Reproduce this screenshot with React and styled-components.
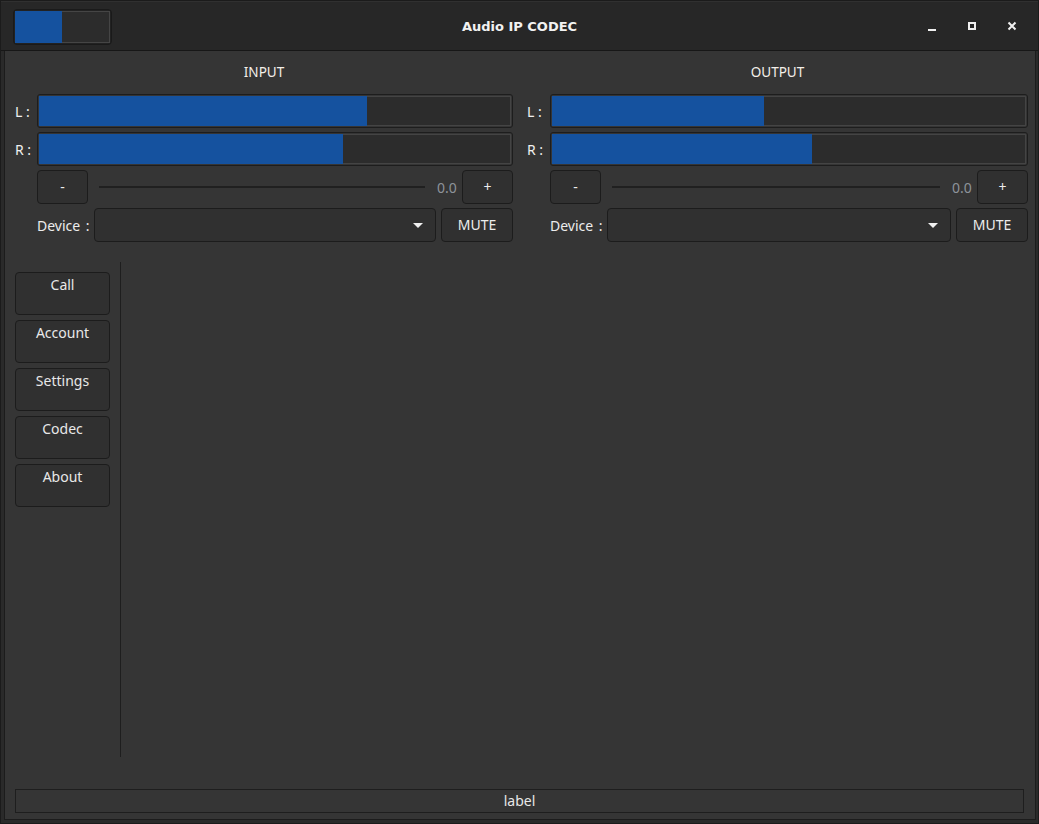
import React from 'react';
import styled, { createGlobalStyle } from 'styled-components';

const GlobalStyle = createGlobalStyle`
  html, body {
    margin: 0;
    padding: 0;
    background: #2a2a2a;
  }
  * {
    box-sizing: border-box;
  }
`;

const Window = styled.div`
  width: 1039px;
  height: 824px;
  display: flex;
  flex-direction: column;
  background: #2a2a2a;
  border: 1px solid #1b1b1b;
  font-family: 'Noto Sans', 'Open Sans', sans-serif;
  font-size: 14px;
  color: #ececec;
`;

const TitleBar = styled.div`
  height: 50px;
  flex: none;
  display: flex;
  align-items: center;
  position: relative;
  padding: 0 0 0 12px;
  background: #272727;
  border-top: 1px solid #303030;
  border-bottom: 1px solid #171717;
`;

const Toggle = styled.div`
  width: 99px;
  height: 36px;
  margin-top: 1px;
  padding: 1px;
  border: 1px solid #1a1a1a;
  border-radius: 4px;
  background: #222;
  display: flex;
`;

const ToggleTrack = styled.div`
  flex: 1;
  display: flex;
  background: #2c2c2c;
  border: 1px solid #454545;
`;

const ToggleKnob = styled.div`
  width: 47px;
  margin: -1px 0 -1px -1px;
  background: #15529f;
`;

const Title = styled.div`
  position: absolute;
  left: 0;
  right: 0;
  top: 0;
  bottom: 0;
  display: flex;
  align-items: center;
  justify-content: center;
  font-family: 'DejaVu Sans', sans-serif;
  font-weight: bold;
  font-size: 13px;
  color: #f2f2f2;
  pointer-events: none;
`;

const WindowControls = styled.div`
  margin-left: auto;
  display: flex;
  align-items: center;
  gap: 24px;
  padding-right: 18px;
  position: relative;
`;

const ControlIcon = styled.svg`
  width: 16px;
  height: 16px;
  display: block;
`;

const Frame = styled.div`
  flex: 1;
  display: flex;
  flex-direction: column;
  margin: 0 2px 3px 3px;
  background: #353535;
  border: 1px solid #1c1c1c;
  border-top: none;
`;

const TopSection = styled.div`
  display: grid;
  grid-template-columns: 498px 501px;
  column-gap: 14px;
  padding: 12px 0 0 10px;
`;

const Panel = styled.div`
  display: grid;
  grid-template-columns: ${(p) => p.$labelWidth}px 1fr;
  grid-template-rows: 27px;
  grid-auto-rows: 34px;
  row-gap: 4px;
  align-items: center;
`;

const PanelTitle = styled.div`
  grid-column: 1 / -1;
  align-self: start;
  height: 18px;
  line-height: 18px;
  text-align: center;
  font-size: 13.5px;
  color: #f4efe9;
`;

const ChannelLabel = styled.div`
  color: #f0f0f0;
`;

const Meter = styled.div`
  height: 34px;
  padding: 1px;
  border: 1px solid #1d1d1d;
  border-radius: 3px;
  display: flex;
`;

const MeterTrack = styled.div`
  flex: 1;
  display: flex;
  background: #2c2c2c;
  border: 1px solid #444;
`;

const MeterFill = styled.div`
  margin: -1px 0 -1px -1px;
  background: #15529f;
`;

const ControlRow = styled.div`
  grid-column: 2;
  display: flex;
  align-items: center;
  height: 34px;
`;

const Button = styled.div`
  flex: none;
  width: ${(p) => p.$width}px;
  height: 34px;
  display: flex;
  align-items: center;
  justify-content: center;
  padding-bottom: 1px;
  background: #303030;
  border: 1px solid #1c1c1c;
  border-radius: 4px;
  color: #ececec;
`;

const SliderLine = styled.div`
  flex: 1;
  height: 2px;
  margin: 0 12px 0 11px;
  background: #202020;
`;

const VolumeValue = styled.div`
  width: 21px;
  margin-right: 4px;
  color: #8d939a;
`;

const DeviceLabel = styled.div`
  width: 57px;
  flex: none;
  white-space: nowrap;
  word-spacing: 2px;
`;

const Combo = styled.div`
  flex: 1;
  height: 34px;
  margin-right: 5px;
  display: flex;
  align-items: center;
  justify-content: flex-end;
  padding-right: 12px;
  background: #303030;
  border: 1px solid #1c1c1c;
  border-radius: 4px;
`;

const ComboArrow = styled.div`
  width: 0;
  height: 0;
  border-left: 5px solid transparent;
  border-right: 5px solid transparent;
  border-top: 5px solid #f0f0f0;
`;

const Middle = styled.div`
  display: flex;
  height: 495px;
  margin-top: 20px;
  padding-left: 10px;
`;

const Sidebar = styled.div`
  width: 95px;
  display: flex;
  flex-direction: column;
  gap: 5px;
  padding-top: 10px;
`;

const NavButton = styled.div`
  height: 43px;
  padding-top: 2px;
  text-align: center;
  line-height: 19px;
  background: #303030;
  border: 1px solid #1c1c1c;
  border-radius: 4px;
  color: #e8e8e8;
`;

const Separator = styled.div`
  width: 1px;
  margin-left: 10px;
  background: #1e1e1e;
`;

const Workspace = styled.div`
  flex: 1;
`;

const StatusLabel = styled.div`
  height: 24px;
  margin: 32px 11px 6px 10px;
  padding-bottom: 2px;
  display: flex;
  align-items: center;
  justify-content: center;
  border: 1px solid #1e1e1e;
  color: #e8e8e8;
`;

function AudioPanel({ title, labelWidth, levels }) {
  return (
    <Panel $labelWidth={labelWidth}>
      <PanelTitle>{title}</PanelTitle>
      <ChannelLabel>L :</ChannelLabel>
      <Meter>
        <MeterTrack>
          <MeterFill style={{ width: `${levels[0]}%` }} />
        </MeterTrack>
      </Meter>
      <ChannelLabel>R :</ChannelLabel>
      <Meter>
        <MeterTrack>
          <MeterFill style={{ width: `${levels[1]}%` }} />
        </MeterTrack>
      </Meter>
      <ControlRow>
        <Button $width={51}>-</Button>
        <SliderLine />
        <VolumeValue>0.0</VolumeValue>
        <Button $width={51}>+</Button>
      </ControlRow>
      <ControlRow>
        <DeviceLabel>Device :</DeviceLabel>
        <Combo>
          <ComboArrow />
        </Combo>
        <Button $width={72}>MUTE</Button>
      </ControlRow>
    </Panel>
  );
}

const navItems = ['Call', 'Account', 'Settings', 'Codec', 'About'];

export default function App() {
  return (
    <>
      <GlobalStyle />
      <Window>
        <TitleBar>
          <Toggle>
            <ToggleTrack>
              <ToggleKnob />
            </ToggleTrack>
          </Toggle>
          <Title>Audio IP CODEC</Title>
          <WindowControls>
            <ControlIcon viewBox="0 0 16 16">
              <rect x="4" y="11" width="8" height="2" fill="#f0f0f0" />
            </ControlIcon>
            <ControlIcon viewBox="0 0 16 16">
              <rect x="5" y="5" width="6" height="6" fill="none" stroke="#f0f0f0" strokeWidth="2" />
            </ControlIcon>
            <ControlIcon viewBox="0 0 16 16">
              <path d="M4.5 4.5 L11.5 11.5 M11.5 4.5 L4.5 11.5" stroke="#f0f0f0" strokeWidth="2" />
            </ControlIcon>
          </WindowControls>
        </TitleBar>
        <Frame>
          <TopSection>
            <AudioPanel title="INPUT" labelWidth={22} levels={[69.8, 64.7]} />
            <AudioPanel title="OUTPUT" labelWidth={23} levels={[45, 55]} />
          </TopSection>
          <Middle>
            <Sidebar>
              {navItems.map((item) => (
                <NavButton key={item}>{item}</NavButton>
              ))}
            </Sidebar>
            <Separator />
            <Workspace />
          </Middle>
          <StatusLabel>label</StatusLabel>
        </Frame>
      </Window>
    </>
  );
}
